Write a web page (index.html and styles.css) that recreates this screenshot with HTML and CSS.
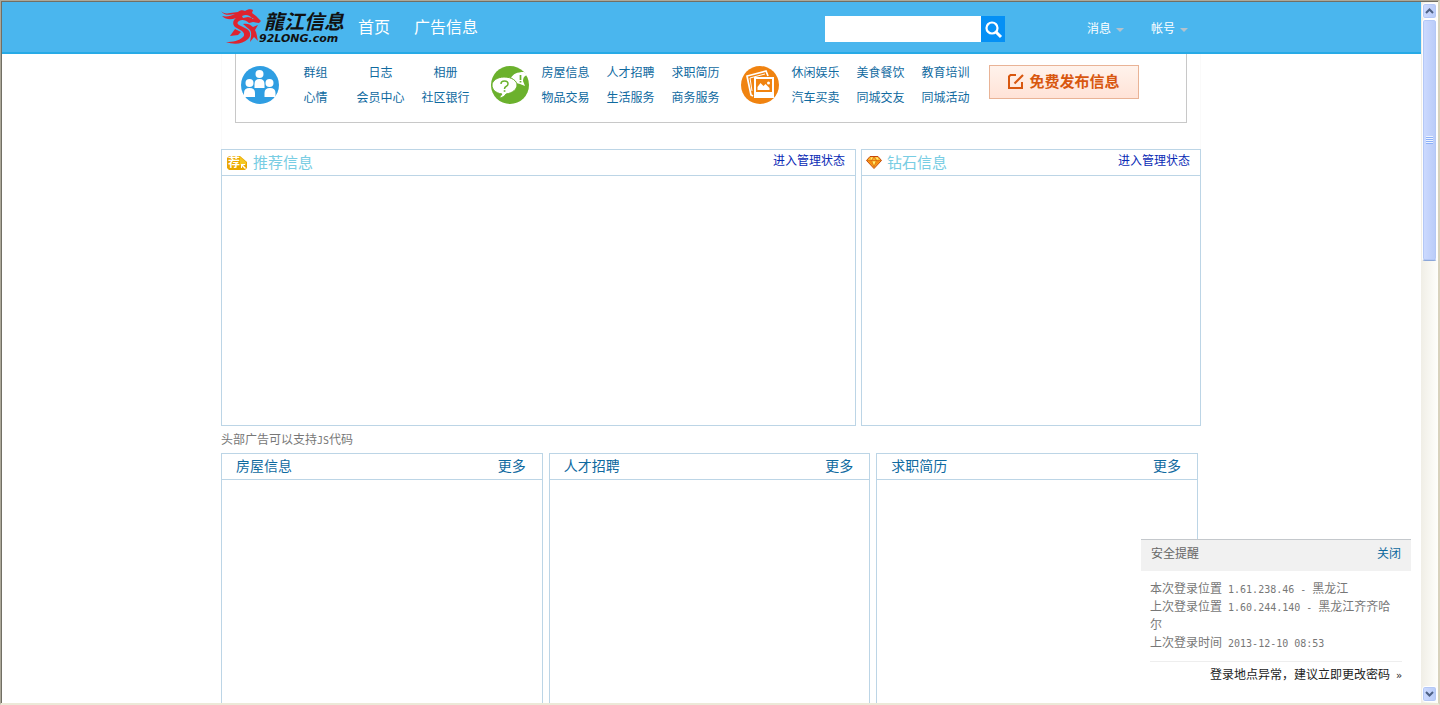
FILE: index.html
```html
<!DOCTYPE html>
<html lang="zh-CN">
<head>
<meta charset="utf-8">
<title>龙江信息</title>
<link rel="stylesheet" href="styles.css">
</head>
<body>
<div class="window">
  <div class="viewport">
    <header class="topbar">
      <div class="wrap topbar-inner">
        <a class="logo" href="#">
          <svg class="dragon" viewBox="0 0 42 36" aria-hidden="true">
            <path fill="#de2430" d="M0 2c2 2 5 3 9 2l8-1c2-2 5-2 7-1 3-2 6-2 8-1l-1 3 4 3 5 5-2 2-6-1-4 1c-3-3-7-4-10-2-2 1-2 3 0 4l8 4c4 3 4 7 1 10-5 5-14 6-22 3 7 0 13-1 17-5 2-2 1-4-1-6l-7-4c-3-3-2-7 1-9-5 2-10 2-14-2 5 1 9 0 13-2-5 1-11 2-14-3z"/>
            <path fill="#4ab6ee" d="M21 7c4-2 7-1 10 2l-4-1-5 1zM31 9l2 1h-2z"/>
            <path fill="#de2430" d="M22 15c4-1 7 0 10 3l5-2-3 5c2 3 2 8 3 11l-4-4-4 5c1-5 2-9 0-12z"/>
            <path fill="#de2430" d="M14 20l6 3-3 3-8 1z"/>
          </svg>
          <span class="logo-text"><span class="logo-cn">龍江信息</span><span class="logo-en">92LONG.com</span></span>
        </a>
        <nav class="main-nav"><a href="#">首页</a><a href="#">广告信息</a></nav>
        <form class="search">
          <input type="text" aria-label="搜索">
          <button type="button" aria-label="搜索"><svg viewBox="0 0 24 26" aria-hidden="true"><circle cx="11" cy="12" r="5.5" fill="none" stroke="#fff" stroke-width="2.2"/><path d="M15 16l5 5" stroke="#fff" stroke-width="3"/></svg></button>
        </form>
        <div class="user-nav"><a href="#">消息<i class="caret"></i></a><a href="#">帐号<i class="caret"></i></a></div>
      </div>
    </header>
    <main class="wrap">
      <section class="menu-area">
        <div class="menu">
          <div class="group">
            <svg class="badge" viewBox="0 0 38 38" aria-hidden="true"><circle cx="19" cy="19" r="19" fill="#2f9ee2"/><g fill="#fff"><circle cx="18.500" cy="8" r="4"/><circle cx="8.500" cy="17" r="4"/><circle cx="28.500" cy="17" r="4"/><path d="M13.500 22v-4q0-5 5-5t5 5v4zM3 31v-4q0-5 5.500-5t5.500 5v4zM23.500 31v-4q0-5 5.500-5t5.500 5v4z"/></g></svg>
            <div class="links"><a href="#">群组</a><a href="#">日志</a><a href="#">相册</a><a href="#">心情</a><a href="#">会员中心</a><a href="#">社区银行</a></div>
          </div>
          <div class="group">
            <svg class="badge" viewBox="0 0 38 38" aria-hidden="true"><circle cx="19" cy="19" r="19" fill="#6bb12d"/><path fill="#fff" d="M20 12c2-4 6-6 13-6l3 3c-3 1-4 3-4 6l2 5-5-2-4-1c0-2-2-4-5-5z"/><path fill="#fff" stroke="#6bb12d" d="M13 11c8 0 13 4 13 8s-4 8-11 9c-1 2-4 4-7 4l3-4C4 27 1 23 1 19s5-8 12-8z"/><path fill="none" stroke="#6bb12d" stroke-width="1.500" d="M10 18q0-3 3.500-3t3.500 3q0 1.500-2 2.500-1.500.7-1.500 2.500"/><path stroke="#6bb12d" stroke-width="1.700" d="M12.700 25h1.700M29.500 9v5M29.500 15v1.500"/></svg>
            <div class="links"><a href="#">房屋信息</a><a href="#">人才招聘</a><a href="#">求职简历</a><a href="#">物品交易</a><a href="#">生活服务</a><a href="#">商务服务</a></div>
          </div>
          <div class="group">
            <svg class="badge" viewBox="0 0 38 38" aria-hidden="true"><circle cx="19" cy="19" r="19" fill="#f08310"/><path fill="none" stroke="#fff" stroke-width="1.700" d="M12 30L10 29 6 10l19-5 2 5"/><path fill="none" stroke="#fff" stroke-width="1" d="M11 25L9 12l15-4"/><path fill="#fff" d="M13 11h20v21H13z"/><path fill="#f08310" d="M15 13h16v13H15z"/><path fill="#fff" d="M16.500 24v-3l3-4 3 3 2-2 4 4v2z"/><circle cx="27.500" cy="17" r="1.500" fill="#fff"/></svg>
            <div class="links"><a href="#">休闲娱乐</a><a href="#">美食餐饮</a><a href="#">教育培训</a><a href="#">汽车买卖</a><a href="#">同城交友</a><a href="#">同城活动</a></div>
          </div>
          <button class="publish" type="button"><svg viewBox="0 0 16 16" aria-hidden="true"><path fill="none" stroke="#d8570f" stroke-width="2" d="M8 2H2.500L1 3.500V15h13V9"/><path stroke="#d8570f" stroke-width="2.200" d="M6.500 10.500L15 2"/></svg>免费发布信息</button>
        </div>
      </section>
      <div class="feature-row">
        <section class="panel feature">
          <header class="feature-head">
            <svg class="rec" viewBox="0 0 22 16" aria-hidden="true"><path fill="#eba800" d="M3 1h11l7 6v6l-2 2H3l-2-2V3z"/><path fill="#f5c722" d="M14 2l6 5v3h-6z"/><text x="2" y="12" class="rec-text">荐</text><path fill="#fff" d="M15 9h4v1h-2l3 3-1 1-3-3v2h-1z"/></svg>
            <h2>推荐信息</h2><a href="#">进入管理状态</a>
          </header>
        </section>
        <section class="panel feature">
          <header class="feature-head">
            <svg class="gem" viewBox="0 0 16 13" aria-hidden="true"><path fill="#fbb52a" stroke="#c5480b" d="M4 .5h8l3.500 4L8 12.500.5 4.500z"/><path fill="#f7880d" d="M2 5h3l2 5zM11 5h3l-5 5z"/><path fill="none" stroke="#d5600b" stroke-width=".7" d="M1 4.500h14M5.500 4.500L8 11l2.500-6.500M5.500 4.500L8 1l2.500 3.500"/><path fill="#fff27a" d="M5 1.500h2L5 4zM6.500 5.500h3L8 9zM9.500 1.500h2l1 2h-1.500z"/></svg>
            <h2>钻石信息</h2><a href="#">进入管理状态</a>
          </header>
        </section>
      </div>
      <p class="ad-note">头部广告可以支持<span class="num">JS</span>代码</p>
      <div class="list-row">
        <section class="panel"><header class="list-head"><h2>房屋信息</h2><a href="#">更多</a></header></section>
        <section class="panel"><header class="list-head"><h2>人才招聘</h2><a href="#">更多</a></header></section>
        <section class="panel"><header class="list-head"><h2>求职简历</h2><a href="#">更多</a></header></section>
      </div>
    </main>
    <aside class="notice">
      <header class="notice-head"><h3>安全提醒</h3><a href="#">关闭</a></header>
      <div class="notice-body">
        <p>本次登录位置<span class="num"> 1.61.238.46 - </span>黑龙江</p>
        <p>上次登录位置<span class="num"> 1.60.244.140 - </span>黑龙江齐齐哈尔</p>
        <p>上次登录时间<span class="num"> 2013-12-10 08:53</span></p>
        <a class="notice-link" href="#">登录地点异常，建议立即更改密码<span class="num"> »</span></a>
      </div>
    </aside>
  </div>
  <div class="scrollbar" aria-hidden="true">
    <div class="arrow"><svg viewBox="0 0 9 6"><path d="M1 5l3.500-3.500L8 5" fill="none" stroke="#4d6185" stroke-width="2"/></svg></div>
    <div class="thumb"><i></i></div>
    <div class="track"></div>
    <div class="arrow"><svg viewBox="0 0 9 6"><path d="M1 1l3.500 3.500L8 1" fill="none" stroke="#4d6185" stroke-width="2"/></svg></div>
  </div>
</div>
</body>
</html>
```
FILE: styles.css
```css
* { box-sizing: border-box; }
body { margin: 0; font: 12px/18px "Noto Sans CJK SC", sans-serif; color: #777; background: #fff; }
a { color: #0f6a9f; text-decoration: none; }
h2, h3, p { margin: 0; font-weight: 400; }
svg { display: block; }
button, input { font: inherit; border: 0; padding: 0; border-radius: 0; }

.window { display: flex; height: 100vh; border: 1px solid #aca899; border-right: 2px solid #d8d2bd; border-bottom: 2px solid #ece9d8; }
.viewport { position: relative; flex: 1; display: flex; flex-direction: column; overflow: hidden; border-top: 1px solid #716f64; border-left: 1px solid #716f64; }
.wrap { width: 981px; margin: 0 auto; padding-right: 1px; }

.topbar { flex: none; background: #4ab6ee; border-bottom: 2px solid #27aae6; }
.topbar-inner { display: flex; align-items: center; height: 50px; padding-right: 14px; }
.logo { display: flex; width: 125px; height: 36px; color: #111; }
.dragon { width: 42px; height: 36px; flex: none; }
.logo-text { display: flex; flex-direction: column; margin-left: -4px; font-style: italic; font-weight: 700; white-space: nowrap; }
.logo-cn { padding-left: 5px; font-size: 20px; line-height: 24px; }
.logo-en { font: italic 700 11px/12px "DejaVu Sans", sans-serif; }
.main-nav { display: flex; gap: 24px; margin-left: 12px; font-size: 16px; line-height: 24px; padding-bottom: 2px; }
.topbar .main-nav a, .topbar .user-nav a { color: #fff; }
.search { display: flex; height: 26px; margin: 4px 0 0 auto; }
.search input { width: 156px; background: #fff; }
.search button { width: 24px; background: #0590f5; }
.user-nav { display: flex; gap: 27px; margin: 2px 0 0 82px; }
.user-nav a { display: flex; align-items: center; gap: 5px; }
.caret { border: 4px solid transparent; border-top-color: #b4c2cc; border-bottom: 0; margin-top: 3px; }

main { flex: 1; display: flex; flex-direction: column; min-height: 0; }
.menu-area { flex: none; padding: 0 13px 26px; border: 0 solid #fafafa; border-width: 0 1px; }
.menu { display: flex; height: 69px; padding: 5px 0 0 5px; border: 1px solid #c8c8c8; border-top: 0; }
.group { display: flex; gap: 4px; margin-right: 13px; }
.badge { width: 38px; height: 38px; margin-top: 7px; }
.links { display: grid; grid-template-columns: repeat(3, 65px); grid-auto-rows: 25px; line-height: 25px; text-align: center; }
.publish { display: flex; align-items: center; justify-content: center; gap: 5px; width: 150px; height: 34px; margin: 6px 0 0 -2px; padding-bottom: 2px; border: 1px solid #e9b396; background: linear-gradient(#fff3ec, #ffe3d7); color: #d8570f; font-size: 15px; font-weight: 700; }
.publish svg { width: 16px; height: 16px; }

.panel { border: 1px solid #bcd5e6; }
.feature-row { flex: none; display: grid; grid-template-columns: 635fr 340fr; gap: 5px; }
.feature { height: 277px; }
.feature-head { display: flex; align-items: center; height: 26px; padding: 0 10px 0 4px; border-bottom: 1px solid #bcd5e6; }
.feature-head h2 { margin-left: 5px; padding-bottom: 2px; font-size: 15px; color: #78cde3; }
.feature-head a { margin: 0 0 5px auto; color: #0a2bb5; }
.rec { width: 22px; height: 16px; overflow: visible; }
.rec-text { font-size: 12px; font-weight: 700; fill: #fff; }
.gem { width: 16px; height: 13px; }
.ad-note { flex: none; padding: 4px 0 5px; }
.list-row { flex: 1; display: grid; grid-template-columns: repeat(3, 1fr); gap: 6px; padding-right: 3px; }
.list-row .panel { border-bottom: 0; }
.list-head { display: flex; justify-content: space-between; height: 26px; padding: 0 16px 0 14px; border-bottom: 1px solid #bcd5e6; font-size: 14px; line-height: 22px; }
.list-head h2 { font-size: 14px; color: #0f6a9f; }

.notice { position: absolute; right: 10px; bottom: 0; width: 270px; border-top: 1px solid #c4c8cc; background: #fff; }
.notice-head { display: flex; justify-content: space-between; padding: 4px 10px 9px; background: #f1f1f1; }
.notice-head h3 { font-size: 12px; color: #666; }
.notice-body { padding: 8px 9px 20px; }
.num { font: 10px/10px "DejaVu Sans Mono", monospace; white-space: pre-wrap; }
.notice-link { display: block; margin-top: 10px; padding-top: 3px; border-top: 1px solid #eee; color: #222; text-align: right; white-space: nowrap; }

.scrollbar { width: 17px; flex: none; display: flex; flex-direction: column; padding: 1px; background: linear-gradient(90deg, #f0eee6, #fefefb); border-top: 1px solid #716f64; }
.arrow, .thumb { flex: none; display: grid; place-items: center; border: 1px solid #fff; border-radius: 3px; box-shadow: inset 0 0 0 1px #b4c8f6; background: linear-gradient(90deg, #cddbff, #b9cbf8); }
.arrow { height: 16px; }
.arrow svg { width: 9px; height: 6px; }
.thumb { height: 242px; border-bottom-color: #8ba6d8; }
.thumb i { width: 7px; height: 8px; background: repeating-linear-gradient(#eef4ff 0 1px, #8cb0f8 1px 2px); }
.track { flex: 1; }
```
